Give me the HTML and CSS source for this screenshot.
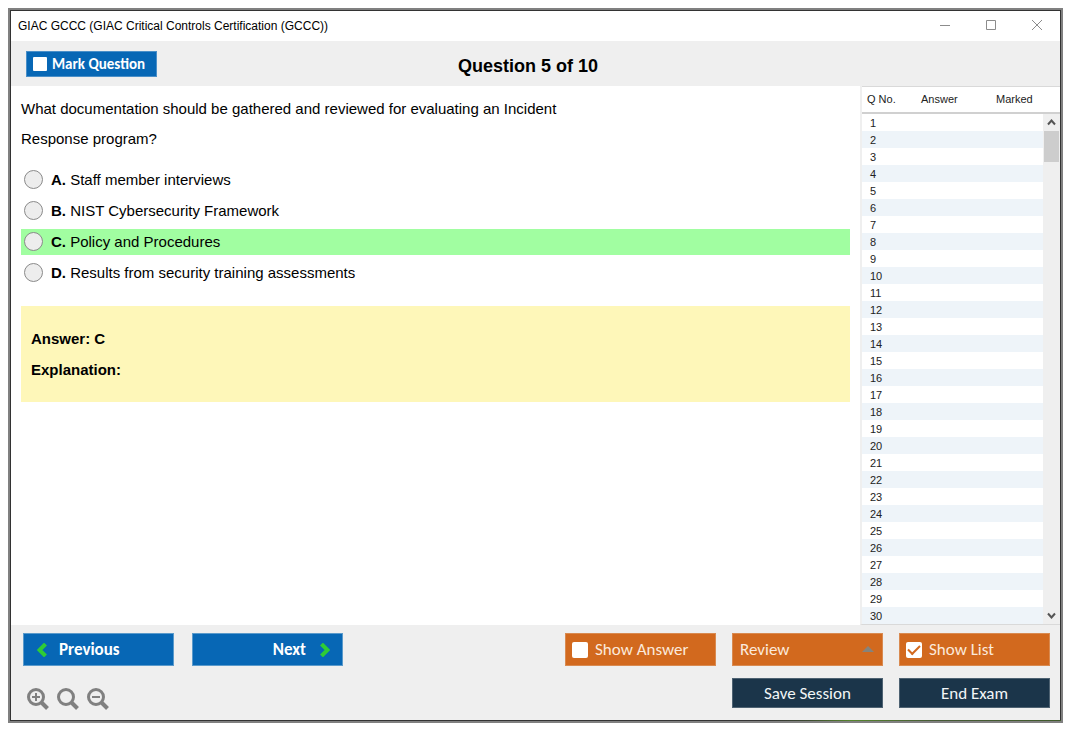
FILE: index.html
```html
<!DOCTYPE html>
<html lang="en">
<head>
<meta charset="UTF-8">
<meta name="viewport" content="width=device-width, initial-scale=1.0">
<title>GIAC GCCC (GIAC Critical Controls Certification (GCCC))</title>
<link rel="stylesheet" href="styles.css">
</head>
<body>
<div class="window">
    <!-- title bar -->
    <div class="titlebar">
        <span class="app-name">GIAC GCCC (GIAC Critical Controls Certification (GCCC))</span>
        <div class="win-btns">
            <button type="button" aria-label="Minimize"><svg width="12" height="12" viewBox="0 0 12 12"><path d="M1 5.500h10"/></svg></button>
            <button type="button" aria-label="Maximize"><svg width="12" height="12" viewBox="0 0 12 12"><path d="M1.500 0.500h9v9h-9z"/></svg></button>
            <button type="button" aria-label="Close"><svg width="12" height="12" viewBox="0 0 12 12"><path d="M1 0l10 10M11 0L1 10"/></svg></button>
        </div>
    </div>

    <!-- header -->
    <header class="header">
        <label class="mark"><input type="checkbox" class="tick small"> Mark Question</label>
        <h1>Question 5 of 10</h1>
    </header>

    <div class="content">
        <!-- question -->
        <main class="question">
            <p class="text">What documentation should be gathered and reviewed for evaluating an Incident<br>Response program?</p>
            <div class="options">
                <label class="option"><input type="radio" name="answer"><span><b>A.</b> Staff member interviews</span></label>
                <label class="option"><input type="radio" name="answer"><span><b>B.</b> NIST Cybersecurity Framework</span></label>
                <label class="option correct"><input type="radio" name="answer"><span><b>C.</b> Policy and Procedures</span></label>
                <label class="option"><input type="radio" name="answer"><span><b>D.</b> Results from security training assessments</span></label>
            </div>
            <div class="answer">
                <p>Answer: C</p>
                <p>Explanation:</p>
            </div>
        </main>

        <!-- question list -->
        <aside class="list">
            <table>
                <thead>
                    <tr><th class="col-no">Q No.</th><th class="col-answer">Answer</th><th>Marked</th></tr>
                </thead>
                <tbody id="rows"></tbody>
            </table>
            <div class="scroll">
                <div class="scroll-head"></div>
                <button type="button" aria-label="Scroll up"><svg width="9" height="7" viewBox="0 0 9 7"><path d="M1 5.500l3.500-4 3.500 4"/></svg></button>
                <div class="thumb"></div>
                <button type="button" class="down" aria-label="Scroll down"><svg width="9" height="7" viewBox="0 0 9 7"><path d="M1 1.500l3.500 4 3.500-4"/></svg></button>
            </div>
        </aside>
    </div>

    <!-- footer -->
    <footer class="footer">
        <div class="left">
            <div class="nav">
                <button type="button" class="btn blue prev">
                    <svg width="10" height="14" viewBox="0 0 10 14"><path d="M8.500 1L2.500 7l6 6"/></svg>Previous
                </button>
                <button type="button" class="btn blue next">
                    Next<svg width="10" height="14" viewBox="0 0 10 14"><path d="M1.500 1l6 6-6 6"/></svg>
                </button>
            </div>
            <div class="zoom">
                <button type="button" aria-label="Zoom in"><svg width="22" height="22" viewBox="0 0 22 22"><circle cx="9" cy="9" r="7.500"/><path class="handle" d="M14.500 14.500l6 6"/><path class="thin" d="M5 9h8M9 5v8"/></svg></button>
                <button type="button" aria-label="Reset zoom"><svg width="22" height="22" viewBox="0 0 22 22"><circle cx="9" cy="9" r="7.500"/><path class="handle" d="M14.500 14.500l6 6"/></svg></button>
                <button type="button" aria-label="Zoom out"><svg width="22" height="22" viewBox="0 0 22 22"><circle cx="9" cy="9" r="7.500"/><path class="handle" d="M14.500 14.500l6 6"/><path class="thin" d="M5 9h8"/></svg></button>
            </div>
        </div>
        <div class="right">
            <label class="btn orange"><input type="checkbox" class="tick">Show Answer</label>
            <div class="review">
                <select class="btn orange" aria-label="Review"><option>Review</option></select>
                <svg width="12" height="6" viewBox="0 0 12 6"><path d="M0 6l6-6 6 6z"/></svg>
            </div>
            <label class="btn orange"><input type="checkbox" class="tick" checked>Show List</label>
            <button type="button" class="btn dark save">Save Session</button>
            <button type="button" class="btn dark">End Exam</button>
        </div>
    </footer>
</div>

<script>
let html='';
for(let i=1;i<=30;i++){
    html+=`<tr><td>${i}</td><td></td><td></td></tr>`;
}
document.getElementById('rows').innerHTML=html;
</script>
</body>
</html>
```
FILE: styles.css
```css
* {box-sizing:border-box;}
body {margin:8px 12px 12px 8px;background:#fff;color:#000;font-family:Arial,"Liberation Sans",sans-serif;font-size:15px;}
button {margin:0;padding:0;border:none;background:none;font-family:inherit;cursor:pointer;}
svg {display:block;fill:none;}
h1,p {margin:0;}

.window {display:flex;flex-direction:column;min-height:calc(100vh - 20px);border:2px solid #808080;padding:1px;background:linear-gradient(90deg,#333 72%,#3c4a30 76%,#55852b 80%,#465a35 88%,#3f5a2a) bottom/100% 1px no-repeat #333;}

/* title bar */
.titlebar {display:flex;justify-content:space-between;align-items:center;height:30px;padding-left:7px;background:#fff;}
.app-name {font-size:12px;}
.win-btns {display:flex;}
.win-btns button {display:flex;align-items:center;justify-content:center;width:46px;height:30px;}
.win-btns svg {stroke:#8c8c8c;}

/* header */
.header {display:grid;grid-template-columns:131px 1fr 131px;align-items:center;height:45px;padding:0 30px 0 15px;background:#efefef;}
.header h1 {font-size:18px;text-align:center;padding-top:5px;}
.mark {display:flex;align-items:center;gap:5px;height:26px;padding-left:6px;background:#0767b5;border:1px solid #4a8fc8;color:#fff;font-family:Calibri,Carlito,Lato,sans-serif;font-size:15px;font-weight:bold;}

.content {display:flex;flex:1;background:#fff;}

/* question */
.question {flex:1;padding:8px 10px 0;}
.text {line-height:30px;}
.options {display:flex;flex-direction:column;gap:5px;margin:13px 0 20px;}
.option {display:flex;align-items:center;gap:8px;height:26px;padding:0 0 2px 3px;}
.option input {appearance:none;width:19px;height:19px;margin:0;border:1px solid #8a8a8a;border-radius:50%;background:#ededed;}
.option input:checked {border:6px solid #555;}
.correct {background:#a1fea1;}
.answer {padding:17px 10px;background:#fef7b9;font-weight:bold;line-height:31px;}

/* question list */
.list {display:flex;width:200px;border-left:2px solid #efefef;border-bottom:1px solid #d9d9d9;font-size:11px;color:#222;}
table {flex:1;align-self:flex-start;border-collapse:separate;border-spacing:0;table-layout:fixed;}
th,td {padding:0;text-align:left;font-weight:normal;}
th,.scroll-head {height:28px;border-top:1px solid #d9d9d9;border-bottom:2px solid #d0d0d0;}
th {white-space:nowrap;padding-bottom:2px;}
th:first-child {padding-left:5px;}
.col-no {width:59px;}
.col-answer {width:75px;}
td {height:17px;}
td:first-child {padding-left:8px;}
tbody tr:nth-child(even) {background:#eef4f9;}
.scroll {display:flex;flex-direction:column;width:17px;background:#efefef;}
.scroll-head {background:#fff;}
.scroll button {display:flex;align-items:center;justify-content:center;height:17px;}
.scroll svg {stroke:#555;stroke-width:2;}
.thumb {height:31px;margin:0 1px;background:#cdcdcd;}
.scroll .down {margin-top:auto;}

/* footer */
.footer {display:flex;justify-content:space-between;height:95px;padding:8px 10px 0 12px;background:#efefef;}
.nav {display:flex;gap:18px;}
.btn {display:flex;align-items:center;width:151px;height:33px;border:1px solid;color:#fff;font-family:Calibri,Carlito,Lato,sans-serif;font-size:17px;}
.blue {background:#0767b5;border-color:#5a9acb;font-weight:bold;}
.blue svg {stroke:#2fcc35;stroke-width:4;}
.prev {gap:12px;padding-left:13px;}
.next {justify-content:flex-end;gap:14px;padding-right:12px;}
.orange {background:#d2691e;border-color:#d98a50;color:#fbe9dc;}
label.orange {gap:7px;padding-left:6px;}
.dark {justify-content:center;height:30px;background:#1b354a;border-color:#4e6272;color:#f2f5f7;}
.right {display:grid;grid-template-columns:repeat(3,151px);gap:12px 16px;align-content:start;}
.save {grid-column:2;}
.review {position:relative;}
.review select {appearance:none;margin:0;padding:0 0 0 7px;border-radius:0;}
.review svg {position:absolute;right:9px;top:13px;fill:#85837c;pointer-events:none;}

.tick {appearance:none;display:flex;align-items:center;justify-content:center;width:16px;height:16px;margin:0;background:#fff;border-radius:2px;}
.tick.small {width:14px;height:14px;border-radius:1px;}
.tick:checked::before {content:"";width:10px;height:5px;border:solid #d2691e;border-width:0 0 2px 2px;transform:translateY(-1px) rotate(-45deg);}

.zoom {display:flex;gap:8px;padding:22px 0 0 4px;}
.zoom svg {stroke:#808080;stroke-width:3;}
.zoom .handle {stroke-width:4;}
.zoom .thin {stroke-width:2;}
```
